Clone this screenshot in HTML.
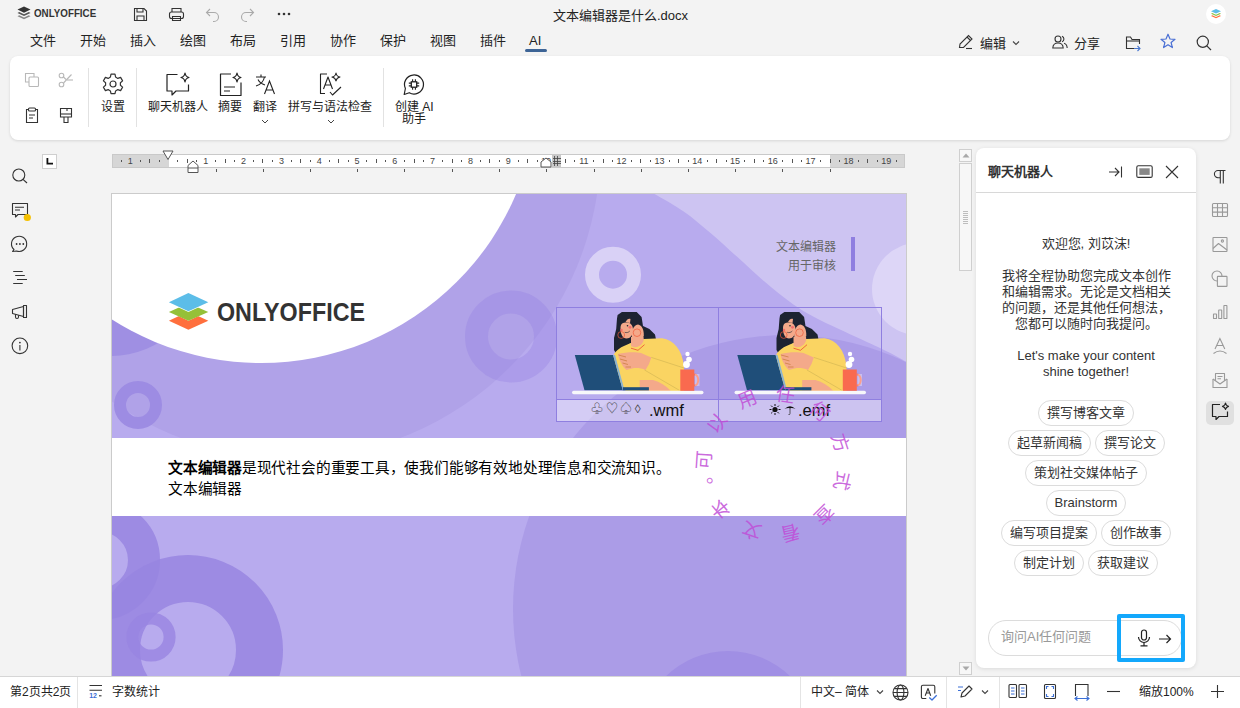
<!DOCTYPE html>
<html lang="zh-CN"><head><meta charset="utf-8">
<style>
*{margin:0;padding:0;box-sizing:border-box}
html,body{width:1240px;height:708px;overflow:hidden}
body{background:#f3f3f3;font-family:"Liberation Sans",sans-serif;color:#222;position:relative}
.a{position:absolute}
.t{position:absolute;white-space:nowrap;line-height:1}
svg{position:absolute;overflow:visible}
.menu{font-size:13px;color:#222;top:34px}
.tb{font-size:12px;color:#222}
.panel{left:10px;top:56px;width:1220px;height:84px;background:#fff;border-radius:8px;box-shadow:0 1px 3px rgba(0,0,0,.12)}
.sep{position:absolute;width:1px;background:#e2e2e2}
.chip{position:absolute;height:26px;border:1px solid #dcdcdc;border-radius:13px;font-size:13px;line-height:24px;color:#333;text-align:center;white-space:nowrap}
</style></head>
<body>
<!-- TITLE BAR -->

<svg style="left:17px;top:6px" width="14" height="15" viewBox="0 0 14 15">
 <path d="M7 0.5 L13.5 3.6 L7 6.7 L0.5 3.6Z" fill="#333"/>
 <path d="M2.2 6 L7 8.3 L11.8 6 L13.5 6.9 L7 10 L0.5 6.9Z" fill="#555"/>
 <path d="M2.2 9.3 L7 11.6 L11.8 9.3 L13.5 10.2 L7 13.3 L0.5 10.2Z" fill="#888"/>
</svg>
<div class="t" style="left:34px;top:8px;font-size:11px;font-weight:bold;color:#333;transform:scaleX(0.89);transform-origin:0 0">ONLYOFFICE</div>
<svg style="left:133px;top:7px" width="15" height="15" viewBox="0 0 15 15" fill="none" stroke="#333" stroke-width="1.1">
 <path d="M1.5 1.5 H11 L13.5 4 V13.5 H1.5Z"/><path d="M4 1.5 V5 H10 V1.5"/><path d="M4 13.5 V9 H11 V13.5"/>
</svg>
<svg style="left:168px;top:7px" width="17" height="15" viewBox="0 0 17 15" fill="none" stroke="#333" stroke-width="1.1">
 <path d="M4 5 V1.5 H13 V5"/><rect x="1.5" y="5" width="14" height="6.5" rx="2"/><path d="M4.5 9.5 H12.5 V13.5 H4.5Z"/>
</svg>
<svg style="left:205px;top:7px" width="15" height="15" viewBox="0 0 15 15" fill="none" stroke="#aaa" stroke-width="1.1">
 <path d="M1.5 5.5 H9 A4.5 4.5 0 0 1 9 14.5 H8"/><path d="M5 2 L1.5 5.5 L5 9"/>
</svg>
<svg style="left:240px;top:7px" width="15" height="15" viewBox="0 0 15 15" fill="none" stroke="#aaa" stroke-width="1.1">
 <path d="M13.5 5.5 H6 A4.5 4.5 0 0 0 6 14.5 H7"/><path d="M10 2 L13.5 5.5 L10 9"/>
</svg>
<svg style="left:277px;top:12px" width="14" height="4" viewBox="0 0 14 4" fill="#333">
 <circle cx="2" cy="2" r="1.3"/><circle cx="7" cy="2" r="1.3"/><circle cx="12" cy="2" r="1.3"/>
</svg>
<div class="t" style="left:553px;top:8.5px;font-size:13px;color:#222">文本编辑器是什么.docx</div>
<div class="a" style="left:1206px;top:4px;width:20px;height:20px;border-radius:50%;background:#fff"></div>
<svg style="left:1210px;top:8px" width="12" height="12" viewBox="0 0 12 12">
 <path d="M6 1 L11 3.3 L6 5.6 L1 3.3Z" fill="#5dbde8"/>
 <path d="M2.3 5 L6 6.8 L9.7 5 L11 5.7 L6 8 L1 5.7Z" fill="#8bc34a"/>
 <path d="M2.3 7.3 L6 9.1 L9.7 7.3 L11 8 L6 10.3 L1 8Z" fill="#ff6f3d"/>
</svg>
<div class="t menu" style="left:30px">文件</div>
<div class="t menu" style="left:80px">开始</div>
<div class="t menu" style="left:130px">插入</div>
<div class="t menu" style="left:180px">绘图</div>
<div class="t menu" style="left:230px">布局</div>
<div class="t menu" style="left:280px">引用</div>
<div class="t menu" style="left:330px">协作</div>
<div class="t menu" style="left:380px">保护</div>
<div class="t menu" style="left:430px">视图</div>
<div class="t menu" style="left:480px">插件</div>
<div class="t menu" style="left:529px">AI</div>
<div class="a" style="left:525px;top:49px;width:22px;height:3px;border-radius:2px;background:#3d6496"></div>
<!-- header right -->
<svg style="left:958px;top:34px" width="16" height="16" viewBox="0 0 16 16" fill="none" stroke="#333" stroke-width="1.1">
 <path d="M1.5 13.5 L2 10 L10.5 1.5 L14 5 L5.5 13.5Z"/><path d="M9 3 L12.5 6.5"/><path d="M8 14.5 H14"/>
</svg>
<div class="t" style="left:980px;top:37px;font-size:13px;color:#222">编辑</div>
<svg style="left:1012px;top:40px" width="8" height="6" viewBox="0 0 8 6" fill="none" stroke="#444" stroke-width="1.1"><path d="M1 1.5 L4 4.5 L7 1.5"/></svg>
<svg style="left:1052px;top:35px" width="16" height="14" viewBox="0 0 16 14" fill="none" stroke="#333" stroke-width="1.1">
 <circle cx="6" cy="4" r="3"/><path d="M0.8 13 C1 9.5 3 8 6 8 C9 8 11 9.5 11.2 13Z"/><path d="M10 1.2 A3 3 0 0 1 10 6.8"/><path d="M12 8.3 C14 8.8 15 10.5 15.2 13"/>
</svg>
<div class="t" style="left:1074px;top:37px;font-size:13px;color:#222">分享</div>
<svg style="left:1125px;top:35px" width="16" height="17" viewBox="0 0 16 17" fill="none" stroke="#333" stroke-width="1.1">
 <path d="M14.5 9 V4.5 H7 L5.5 2 H1.5 V13.5 H9"/><path d="M1.5 6 H14.5"/>
 <path d="M9 13.5 H15 M12.5 11 L15 13.5 L12.5 16" stroke="#4a78d0"/>
</svg>
<svg style="left:1160px;top:33px" width="16" height="16" viewBox="0 0 16 16" fill="none" stroke="#4a6fd4" stroke-width="1.2" stroke-linejoin="round">
 <path d="M8 1.2 L10 6 L15 6.3 L11.1 9.5 L12.4 14.6 L8 11.8 L3.6 14.6 L4.9 9.5 L1 6.3 L6 6Z"/>
</svg>
<svg style="left:1196px;top:35px" width="16" height="16" viewBox="0 0 16 16" fill="none" stroke="#333" stroke-width="1.2">
 <circle cx="6.8" cy="6.8" r="5.6"/><path d="M10.8 10.8 L15 15"/>
</svg>

<div class="panel a"></div>

<svg style="left:24px;top:72px" width="16" height="16" viewBox="0 0 16 16" fill="none" stroke="#b8b8b8" stroke-width="1.1">
 <path d="M10 5 V1.5 H1.5 V10 H5"/><rect x="5" y="5" width="9.5" height="9.5" rx="1"/>
</svg>
<svg style="left:58px;top:72px" width="16" height="16" viewBox="0 0 16 16" fill="none" stroke="#b8b8b8" stroke-width="1.1">
 <circle cx="3.5" cy="3.5" r="2.3"/><circle cx="3.5" cy="12.5" r="2.3"/><path d="M5.5 11 L13.5 2.5"/><path d="M5.5 5 L8 7.5"/><path d="M9 8 H15"/>
</svg>
<svg style="left:25px;top:107px" width="14" height="17" viewBox="0 0 14 17" fill="none" stroke="#333" stroke-width="1.1">
 <path d="M3.5 2.5 H1.5 V15.5 H12.5 V2.5 H10.5"/><rect x="3.5" y="1" width="7" height="3" rx="1"/><path d="M4 8 H10 M4 11 H8"/>
</svg>
<svg style="left:59px;top:107px" width="14" height="17" viewBox="0 0 14 17" fill="none" stroke="#333" stroke-width="1.1">
 <path d="M1.5 1.5 H12.5 V10 H1.5Z"/><path d="M1.5 7 H12.5"/><path d="M8 1.5 V4"/><path d="M5 10 V15.5 H9 V10"/>
</svg>
<div class="sep" style="left:88px;top:68px;height:59px"></div>
<svg style="left:102px;top:73px" width="22" height="22" viewBox="0 0 22 22" fill="none" stroke="#333" stroke-width="1.2" stroke-linejoin="round">
 <path d="M9 1.5 H13 L13.6 4.4 L15.8 5.7 L18.6 4.7 L20.6 8.2 L18.4 10.1 V12.6 L20.6 14.4 L18.6 17.9 L15.8 16.9 L13.6 18.2 L13 21 H9 L8.4 18.2 L6.2 16.9 L3.4 17.9 L1.4 14.4 L3.6 12.6 V10.1 L1.4 8.2 L3.4 4.7 L6.2 5.7 L8.4 4.4Z" transform="translate(0,-0.3)"/>
 <circle cx="11" cy="11" r="3"/>
</svg>
<div class="t tb" style="left:101px;top:101px">设置</div>
<div class="sep" style="left:136px;top:68px;height:59px"></div>
<svg style="left:165px;top:72px" width="26" height="25" viewBox="0 0 26 25" fill="none" stroke="#222" stroke-width="1.2" stroke-linejoin="round">
 <path d="M12.5 2.5 H2 V19 H7 V23 L11 19 H23.5 V12.5"/>
 <path d="M20 1 Q20.6 4.8 24 5.5 Q20.6 6.2 20 10 Q19.4 6.2 16 5.5 Q19.4 4.8 20 1Z"/>
</svg>
<div class="t tb" style="left:148px;top:101px">聊天机器人</div>
<svg style="left:219px;top:72px" width="25" height="25" viewBox="0 0 25 25" fill="none" stroke="#222" stroke-width="1.2" stroke-linejoin="round">
 <path d="M12 2 H1.5 V23.5 H22 V10.5"/><path d="M5 15 H16 M5 19 H11"/>
 <path d="M18 1 Q18.6 4.8 22 5.5 Q18.6 6.2 18 10 Q17.4 6.2 14 5.5 Q17.4 4.8 18 1Z"/>
</svg>
<div class="t tb" style="left:218px;top:101px">摘要</div>
<svg style="left:255px;top:73px" width="22" height="22" viewBox="0 0 22 22" fill="none" stroke="#222" stroke-width="1.1">
 <path d="M1 4 H11 M6 1.5 V4 M9.5 4 Q8 11 1 13 M3 6.5 Q5 10.5 10 12"/>
 <path d="M9.5 21 L14.5 8 L19.5 21 M11 17 H18"/>
</svg>
<div class="t tb" style="left:253px;top:101px">翻译</div>
<svg style="left:261px;top:119px" width="8" height="5" viewBox="0 0 8 5" fill="none" stroke="#444" stroke-width="1"><path d="M1 1 L4 4 L7 1"/></svg>
<svg style="left:319px;top:72px" width="24" height="25" viewBox="0 0 24 25" fill="none" stroke="#222" stroke-width="1.1" stroke-linejoin="round">
 <path d="M8 2 H1.5 V21.5 H6"/><path d="M4.5 17 L9 5 L13.5 17 M6 13 H12"/>
 <path d="M11 20 L13.5 23 L22 15"/>
 <path d="M17 1 Q17.6 4.5 21 5 Q17.6 5.6 17 9 Q16.4 5.6 13 5 Q16.4 4.5 17 1Z"/>
</svg>
<div class="t tb" style="left:288px;top:101px">拼写与语法检查</div>
<svg style="left:327px;top:119px" width="8" height="5" viewBox="0 0 8 5" fill="none" stroke="#444" stroke-width="1"><path d="M1 1 L4 4 L7 1"/></svg>
<div class="sep" style="left:383px;top:68px;height:59px"></div>
<svg style="left:403px;top:73.5px" width="22" height="23" viewBox="0 0 22 23" fill="none" stroke="#222" stroke-width="1.2">
 <path d="M6.25 18.7 A9.5 9.5 0 1 0 2.39 14.5 L1.2 20.5 Z" stroke-linejoin="round"/>
 <rect x="8.3" y="7.8" width="5.4" height="5.4" stroke-width="1.3"/><path d="M9.6 5.3 V7.8 M12.4 5.3 V7.8 M9.6 13.2 V15.7 M12.4 13.2 V15.7 M5.8 9.1 H8.3 M5.8 11.9 H8.3 M13.7 9.1 H16.2 M13.7 11.9 H16.2" stroke-width="1.1"/>
</svg>
<div class="t tb" style="left:395px;top:101px">创建 AI</div>
<div class="t tb" style="left:402px;top:113px">助手</div>


<svg style="left:11px;top:168px" width="18" height="18" viewBox="0 0 18 18" fill="none" stroke="#333" stroke-width="1.1">
 <circle cx="7.8" cy="7" r="6"/><path d="M12 11.3 L16 15"/>
</svg>
<svg style="left:11px;top:202px" width="22" height="20" viewBox="0 0 22 20" fill="none" stroke="#333" stroke-width="1.1" stroke-linejoin="round">
 <path d="M1.5 1.5 H16.5 V12.5 H7 L4.5 15 V12.5 H1.5Z"/><path d="M4 5.3 H13 M4 8 H9"/>
 <circle cx="16.3" cy="15.5" r="3.6" fill="#f5c000" stroke="none"/>
</svg>
<svg style="left:11px;top:235px" width="18" height="18" viewBox="0 0 18 18" fill="none" stroke="#333" stroke-width="1.1">
 <path d="M3 14.5 A7.6 7.6 0 1 1 5.5 16 L1.5 16.5 Z" stroke-linejoin="round"/>
 <circle cx="5.6" cy="9" r="0.9" fill="#333" stroke="none"/><circle cx="8.9" cy="9" r="0.9" fill="#333" stroke="none"/><circle cx="12.3" cy="9" r="0.9" fill="#333" stroke="none"/>
</svg>
<svg style="left:11px;top:268px" width="18" height="18" viewBox="0 0 18 18" fill="none" stroke="#333" stroke-width="1.1">
 <path d="M2.2 3.5 H11.7 M4.2 7.5 H13.8 M6 11.5 H16 M2.2 15.5 H11.7"/>
</svg>
<svg style="left:11px;top:304px" width="18" height="18" viewBox="0 0 18 18" fill="none" stroke="#333" stroke-width="1.1" stroke-linejoin="round">
 <path d="M1.5 5.5 L12.5 2.5 V12.5 L1.5 9.5 Z"/><rect x="12.5" y="1.5" width="3" height="12"/><path d="M4.5 10.3 V13 Q4.5 14.5 6 14.5 Q7.5 14.5 7.5 13 V11.2"/>
</svg>
<svg style="left:11px;top:337px" width="18" height="18" viewBox="0 0 18 18" fill="none" stroke="#333" stroke-width="1.1">
 <circle cx="8.9" cy="8.8" r="7.8"/><path d="M8.9 8 V13.4"/><circle cx="8.9" cy="5.6" r="0.9" fill="#333" stroke="none"/>
</svg>

<svg style="left:0;top:0" width="1240" height="200" shape-rendering="crispEdges"><rect x="112.5" y="154.5" width="792" height="13" fill="#fff" stroke="#c9c9c9"/><rect x="113" y="155" width="55.5" height="12" fill="#d6d6d6"/><rect x="830" y="155" width="74" height="12" fill="#d6d6d6"/><rect x="121" y="159.5" width="1" height="2" fill="#555"/><rect x="140" y="159.5" width="1" height="2" fill="#555"/><rect x="149" y="158.5" width="1" height="4" fill="#555"/><rect x="159" y="159.5" width="1" height="2" fill="#555"/><rect x="177" y="159.5" width="1" height="2" fill="#555"/><rect x="187" y="158.5" width="1" height="4" fill="#555"/><rect x="196" y="159.5" width="1" height="2" fill="#555"/><rect x="215" y="159.5" width="1" height="2" fill="#555"/><rect x="225" y="158.5" width="1" height="4" fill="#555"/><rect x="234" y="159.5" width="1" height="2" fill="#555"/><rect x="253" y="159.5" width="1" height="2" fill="#555"/><rect x="262" y="158.5" width="1" height="4" fill="#555"/><rect x="272" y="159.5" width="1" height="2" fill="#555"/><rect x="291" y="159.5" width="1" height="2" fill="#555"/><rect x="300" y="158.5" width="1" height="4" fill="#555"/><rect x="310" y="159.5" width="1" height="2" fill="#555"/><rect x="329" y="159.5" width="1" height="2" fill="#555"/><rect x="338" y="158.5" width="1" height="4" fill="#555"/><rect x="348" y="159.5" width="1" height="2" fill="#555"/><rect x="366" y="159.5" width="1" height="2" fill="#555"/><rect x="376" y="158.5" width="1" height="4" fill="#555"/><rect x="385" y="159.5" width="1" height="2" fill="#555"/><rect x="404" y="159.5" width="1" height="2" fill="#555"/><rect x="414" y="158.5" width="1" height="4" fill="#555"/><rect x="423" y="159.5" width="1" height="2" fill="#555"/><rect x="442" y="159.5" width="1" height="2" fill="#555"/><rect x="452" y="158.5" width="1" height="4" fill="#555"/><rect x="461" y="159.5" width="1" height="2" fill="#555"/><rect x="480" y="159.5" width="1" height="2" fill="#555"/><rect x="489" y="158.5" width="1" height="4" fill="#555"/><rect x="499" y="159.5" width="1" height="2" fill="#555"/><rect x="518" y="159.5" width="1" height="2" fill="#555"/><rect x="527" y="158.5" width="1" height="4" fill="#555"/><rect x="537" y="159.5" width="1" height="2" fill="#555"/><rect x="555" y="159.5" width="1" height="2" fill="#555"/><rect x="565" y="158.5" width="1" height="4" fill="#555"/><rect x="574" y="159.5" width="1" height="2" fill="#555"/><rect x="593" y="159.5" width="1" height="2" fill="#555"/><rect x="603" y="158.5" width="1" height="4" fill="#555"/><rect x="612" y="159.5" width="1" height="2" fill="#555"/><rect x="631" y="159.5" width="1" height="2" fill="#555"/><rect x="640" y="158.5" width="1" height="4" fill="#555"/><rect x="650" y="159.5" width="1" height="2" fill="#555"/><rect x="669" y="159.5" width="1" height="2" fill="#555"/><rect x="678" y="158.5" width="1" height="4" fill="#555"/><rect x="688" y="159.5" width="1" height="2" fill="#555"/><rect x="707" y="159.5" width="1" height="2" fill="#555"/><rect x="716" y="158.5" width="1" height="4" fill="#555"/><rect x="726" y="159.5" width="1" height="2" fill="#555"/><rect x="744" y="159.5" width="1" height="2" fill="#555"/><rect x="754" y="158.5" width="1" height="4" fill="#555"/><rect x="763" y="159.5" width="1" height="2" fill="#555"/><rect x="782" y="159.5" width="1" height="2" fill="#555"/><rect x="792" y="158.5" width="1" height="4" fill="#555"/><rect x="801" y="159.5" width="1" height="2" fill="#555"/><rect x="820" y="159.5" width="1" height="2" fill="#555"/><rect x="830" y="158.5" width="1" height="4" fill="#555"/><rect x="839" y="159.5" width="1" height="2" fill="#555"/><rect x="858" y="159.5" width="1" height="2" fill="#555"/><rect x="867" y="158.5" width="1" height="4" fill="#555"/><rect x="877" y="159.5" width="1" height="2" fill="#555"/><rect x="896" y="159.5" width="1" height="2" fill="#555"/></svg><svg style="left:0;top:0" width="1240" height="200"><text x="130.2" y="164" font-size="9" text-anchor="middle" font-family="Liberation Sans" fill="#444">1</text><text x="205.8" y="164" font-size="9" text-anchor="middle" font-family="Liberation Sans" fill="#444">1</text><text x="243.6" y="164" font-size="9" text-anchor="middle" font-family="Liberation Sans" fill="#444">2</text><text x="281.4" y="164" font-size="9" text-anchor="middle" font-family="Liberation Sans" fill="#444">3</text><text x="319.2" y="164" font-size="9" text-anchor="middle" font-family="Liberation Sans" fill="#444">4</text><text x="357.0" y="164" font-size="9" text-anchor="middle" font-family="Liberation Sans" fill="#444">5</text><text x="394.8" y="164" font-size="9" text-anchor="middle" font-family="Liberation Sans" fill="#444">6</text><text x="432.6" y="164" font-size="9" text-anchor="middle" font-family="Liberation Sans" fill="#444">7</text><text x="470.4" y="164" font-size="9" text-anchor="middle" font-family="Liberation Sans" fill="#444">8</text><text x="508.2" y="164" font-size="9" text-anchor="middle" font-family="Liberation Sans" fill="#444">9</text><text x="546.0" y="164" font-size="9" text-anchor="middle" font-family="Liberation Sans" fill="#444">10</text><text x="583.8" y="164" font-size="9" text-anchor="middle" font-family="Liberation Sans" fill="#444">11</text><text x="621.6" y="164" font-size="9" text-anchor="middle" font-family="Liberation Sans" fill="#444">12</text><text x="659.4" y="164" font-size="9" text-anchor="middle" font-family="Liberation Sans" fill="#444">13</text><text x="697.2" y="164" font-size="9" text-anchor="middle" font-family="Liberation Sans" fill="#444">14</text><text x="735.0" y="164" font-size="9" text-anchor="middle" font-family="Liberation Sans" fill="#444">15</text><text x="772.8" y="164" font-size="9" text-anchor="middle" font-family="Liberation Sans" fill="#444">16</text><text x="810.6" y="164" font-size="9" text-anchor="middle" font-family="Liberation Sans" fill="#444">17</text><text x="848.4" y="164" font-size="9" text-anchor="middle" font-family="Liberation Sans" fill="#444">18</text><text x="886.2" y="164" font-size="9" text-anchor="middle" font-family="Liberation Sans" fill="#444">19</text><rect x="216" y="169" width="1" height="3" fill="#555"/><rect x="263" y="169" width="1" height="3" fill="#555"/><rect x="310" y="169" width="1" height="3" fill="#555"/><rect x="357" y="169" width="1" height="3" fill="#555"/><rect x="404" y="169" width="1" height="3" fill="#555"/><rect x="452" y="169" width="1" height="3" fill="#555"/><rect x="499" y="169" width="1" height="3" fill="#555"/><rect x="546" y="169" width="1" height="3" fill="#555"/><rect x="594" y="169" width="1" height="3" fill="#555"/><rect x="641" y="169" width="1" height="3" fill="#555"/><rect x="688" y="169" width="1" height="3" fill="#555"/><rect x="735" y="169" width="1" height="3" fill="#555"/><rect x="782" y="169" width="1" height="3" fill="#555"/><rect x="830" y="169" width="1" height="3" fill="#555"/></svg><svg style="left:162px;top:150px" width="12" height="11" viewBox="0 0 12 11"><path d="M1 1 H11 L6 9.5Z" fill="#fff" stroke="#555" stroke-width="1"/></svg>
<svg style="left:187px;top:160px" width="12" height="14" viewBox="0 0 12 14"><path d="M1 5.5 L6 1 L11 5.5 V12.5 H1Z M1 8 H11" fill="#fff" stroke="#555" stroke-width="1"/></svg>
<svg style="left:540px;top:157px" width="12" height="11" viewBox="0 0 12 11"><path d="M1 5 L6 1 L11 5 V10 H1Z" fill="#fff" stroke="#555" stroke-width="1"/></svg>
<div class="a" style="left:552px;top:155px;width:9px;height:12px;background:#c8c8c8"></div>
<svg style="left:552px;top:156px" width="9" height="10" viewBox="0 0 9 10" stroke="#444" stroke-width="0.8" shape-rendering="crispEdges"><path d="M2.5 0 V10 M5.5 0 V10 M0.5 2.5 H8.5 M0.5 5 H8.5 M0.5 7.5 H8.5"/></svg>
<div class="a" style="left:42px;top:154px;width:15px;height:15px;background:#fff;border:1px solid #cfcfcf"></div>
<svg style="left:46px;top:158px" width="7" height="7" viewBox="0 0 7 7"><path d="M0.5 0 V6.5 H7 V4.8 H2.3 V0Z" fill="#111"/></svg>


<div class="a" style="left:111px;top:193px;width:796px;height:490px;border:1px solid #cbcbcb;background:#fff"></div>
<svg style="left:111px;top:193px" width="795" height="483" viewBox="0 0 795 483">
 <defs>
  <clipPath id="pc"><rect x="1" y="1" width="794" height="482"/></clipPath>
  <mask id="ringA"><rect x="-200" y="-200" width="1200" height="900" fill="#fff"/></mask>
  <g id="girl">
   <path d="M61.6,9 L65.9,6 L80.7,6 L85.6,11 L87,20 L93.4,23 L99,28.5 L100,33.5 L88,33.5 L74,37.5 L60,47.5 L58,44 L58,32 L60.2,23 L61,12.6 Z" fill="#1d2331"/>
   <path d="M58,48 C62,42 68,40 74.3,37.3 L87.8,33 L106,32.3 C118,34 126,44 128,60 L128,85 L70,85 C62,78 57,60 58,48Z" fill="#fad462"/>
   <path d="M75,31 L87.5,31 L87.8,34 C86,40 80,43 75,40Z" fill="#f4a98a"/>
   <path d="M75,42.2 L82,44.3 L88.5,38.7" fill="none" stroke="#ef5a3a" stroke-width="0.9"/>
   <path d="M64.5,22 C64.5,17.5 67,16.5 70.5,16.5 C74.5,16.5 77,19 77,24 C77,29.5 74,32.5 70.5,32.5 C66.5,32.5 64.5,28 64.5,22Z" fill="#f4a98a"/>
   <path d="M69.5,16 C71,13 73,12 74.5,13 L74,17Z" fill="#f4a98a"/>
   <path d="M76,32 C75,26 77,19 82,18.5 C86,19 88,24 87.8,30 L86,33Z" fill="#f4a98a"/>
   <circle cx="71.5" cy="19.8" r="0.8" fill="#1d2331"/>
   <circle cx="74" cy="21.3" r="1.4" fill="#f56d6d"/><circle cx="65.5" cy="24" r="1.2" fill="#f56d6d"/>
   <path d="M68.7,26.3 C70.5,27 72.5,26.5 73.8,25" fill="none" stroke="#1d2331" stroke-width="0.6"/>
   <circle cx="65.2" cy="29" r="3.4" fill="none" stroke="#ef5a3a" stroke-width="0.7"/>
   <circle cx="81" cy="26.7" r="3.8" fill="none" stroke="#ef5a3a" stroke-width="0.7"/>
   <path d="M95.3,51.4 L128,62" stroke="#b9a24a" stroke-width="0.4" fill="none"/>
   <path d="M88.5,64 L123.4,84.3" stroke="#b9a24a" stroke-width="0.4" fill="none"/>
   <path d="M62,48 C70,46 80,46 85,47 L95.3,51.4 L93,58 L89.5,64 C85,62 80,61.5 76,62.5 L70.5,64 C66,60 63,54 62,48Z" fill="#f4a98a"/>
   <path d="M62.5,49 L70,51 M64,53 L71,55 M66.5,57 L72,58.5 M69.5,61 L75,61" stroke="#c77a3a" stroke-width="0.7" fill="none"/>
   <path d="M83.7,74 L97,74 C104,76 110,80 114.7,84.8 L83.7,84.8Z" fill="#f4a98a"/>
   <path d="M18.8,49 L57.1,49 L66.8,84.3 L28.5,84.3Z" fill="#1f4e79"/>
   <path d="M57.1,49 L59,49 L68.5,84.3 L66.8,84.3Z" fill="#8ab4d4"/>
   <path d="M66.8,81.2 L92.9,81.2 L92.9,84.5 L66.8,84.5Z" fill="#1f4e79"/>
   <rect x="16" y="84.8" width="131.5" height="3.4" rx="1.7" fill="#f7f7fa"/>
   <rect x="124.3" y="63.5" width="14" height="21.3" fill="#f96a4f"/>
   <path d="M138.3,68.5 C143.5,68.5 143.5,79.5 138.3,79.5" fill="none" stroke="#f96a4f" stroke-width="2"/>
   <rect x="139" y="68" width="4.5" height="12" fill="#fff" opacity="0.35"/>
   <circle cx="130.5" cy="58.5" r="3.4" fill="#fff"/><circle cx="133" cy="53.5" r="2.8" fill="#fff"/><circle cx="131.5" cy="48" r="2.2" fill="#fff"/>
  </g>
 </defs>
 <g clip-path="url(#pc)">
  <rect x="0" y="0" width="795" height="483" fill="#b8abee"/>
  <!-- top light region -->
  <path d="M541.8,0.0 C546.9,3.1 563.1,11.8 572.7,18.5 C582.3,25.2 590.5,32.4 599.5,40.0 C608.5,47.6 617.4,56.1 626.4,64.1 C635.4,72.2 644.2,80.7 653.2,88.3 C662.2,95.9 671.2,103.5 680.1,109.8 C689.0,116.1 691.9,118.3 706.9,125.9 C721.9,133.5 755.2,148.2 770.0,155.4 C784.8,162.5 791.2,166.6 795.5,168.8 L800,168.8 L800,-5 L541.8,-5 Z" fill="#cdc4f2"/>
  <!-- darker circle -->
  <circle cx="179.5" cy="-45" r="310" fill="#b0a2e8"/>
  <!-- big lower right circle -->
  <circle cx="676" cy="416" r="274" fill="#ab9ce7"/>
  <circle cx="617" cy="547" r="89" fill="#a08fe4"/>
  <!-- left dark patch -->
  <circle cx="-1" cy="67" r="96" fill="#9f8fe3"/>
  <!-- white circle -->
  <circle cx="150" cy="-107" r="277" fill="#ffffff"/>
  <!-- rings -->
  <circle cx="27" cy="212" r="18" fill="none" stroke="#9d8ce3" stroke-width="12"/>
  <circle cx="400" cy="143.5" r="34.5" fill="none" stroke="rgba(150,130,225,0.35)" stroke-width="23"/>
  <circle cx="502" cy="81.69999999999999" r="21" fill="none" stroke="#d9d1f6" stroke-width="14"/>
  <circle cx="807" cy="96" r="46" fill="#ddd6f7"/>
  <!-- lower rings -->
  <circle cx="-11" cy="367" r="44" fill="none" stroke="rgba(152,133,225,0.85)" stroke-width="32"/>
  <circle cx="77" cy="457" r="71.5" fill="none" stroke="rgba(152,133,225,0.85)" stroke-width="47"/>
  <circle cx="40" cy="444" r="18.6" fill="none" stroke="rgba(152,133,225,0.8)" stroke-width="12"/>
  <!-- white band -->
  <rect x="1" y="245" width="794" height="78" fill="#fff"/>
  <!-- logo -->
  <path d="M77.4,118.60000000000002 L97.30000000000001,127.80000000000001 L77.4,136.8 L57.900000000000006,127.80000000000001Z" fill="#ff6f3d"/>
  <path d="M77.4,109.60000000000002 L97.30000000000001,118.60000000000002 L77.4,127.69999999999999 L57.900000000000006,118.60000000000002Z" fill="#fff"/>
  <path d="M77.4,110.19999999999999 L97.30000000000001,119 L77.4,127.69999999999999 L57.900000000000006,119Z" fill="#95c038"/>
  <path d="M77.4,101 L97.30000000000001,110 L77.4,119 L57.900000000000006,110Z" fill="#fff"/>
  <path d="M77.4,100 L97.30000000000001,109.19999999999999 L77.4,118.30000000000001 L57.900000000000006,109.19999999999999Z" fill="#5cbde8"/>
 </g>
 <text x="106" y="127.5" font-family="Liberation Sans" font-weight="bold" font-size="25" fill="#333" textLength="148" lengthAdjust="spacingAndGlyphs">ONLYOFFICE</text>
 <rect x="740" y="44" width="4" height="34" fill="#8f7fe0"/>
 <!-- table -->
 <rect x="446" y="206.5" width="324.5" height="22.5" fill="rgba(255,255,255,0.4)"/>
 <use href="#girl" x="445" y="113"/>
 <use href="#girl" x="607.5" y="113"/>
 <g fill="none" stroke="#8f7fe0" stroke-width="1" shape-rendering="crispEdges">
  <rect x="445.5" y="114.5" width="325" height="114"/>
  <path d="M607.5,114.5 V228.5 M445.5,206.5 H770.5"/>
 </g>
</svg>
<div class="t" style="left:776px;top:241px;font-size:12px;color:#666">文本编辑器</div>
<div class="t" style="left:788px;top:259.5px;font-size:12px;color:#666">用于审核</div>
<div class="t" style="left:591px;top:403px;font-size:12px;color:#444;letter-spacing:2.6px">♧♡♤◊</div><div class="t" style="left:649px;top:401.5px;font-size:16.5px;color:#111">.wmf</div>
<svg style="left:769px;top:403px" width="28" height="13" viewBox="0 0 28 13">
 <circle cx="6" cy="6.5" r="2.6" fill="#111"/>
 <g stroke="#111" stroke-width="1"><path d="M6 1 V3 M6 10 V12 M0.5 6.5 H2.5 M9.5 6.5 H11.5 M2.1 2.6 L3.5 4 M8.5 9 L9.9 10.4 M2.1 10.4 L3.5 9 M8.5 4 L9.9 2.6"/></g>
 <path d="M15.5 6 Q21 0.5 26.5 6 Q24 4.8 21 5.2 Q18 4.8 15.5 6Z" fill="#111"/>
 <path d="M21 5 V10.5 Q21 12 19.5 11.5" fill="none" stroke="#333" stroke-width="0.8"/>
</svg>
<div class="t" style="left:798px;top:401.5px;font-size:16.5px;color:#111">.emf</div>
<div class="t" style="left:168px;top:460.5px;font-size:14.67px;color:#000;letter-spacing:-0.22px"><b>文本编辑器</b>是现代社会的重要工具，使我们能够有效地处理信息和交流知识。</div>
<div class="t" style="left:168px;top:481.5px;font-size:14.67px;color:#000;letter-spacing:-0.22px">文本编辑器</div>


<div class="a" style="left:959px;top:149px;width:13px;height:13px;border:1px solid #cfcfcf;background:#f7f7f7"></div>
<svg style="left:962px;top:153px" width="8" height="5" viewBox="0 0 8 5"><path d="M0.5 4.5 L4 0.5 L7.5 4.5Z" fill="#a8a8a8"/></svg>
<div class="a" style="left:959px;top:163px;width:13px;height:108px;border:1px solid #cfcfcf;background:#f7f7f7"></div>
<svg style="left:963px;top:211px" width="6" height="14" viewBox="0 0 6 14" stroke="#bdbdbd" stroke-width="1" shape-rendering="crispEdges"><path d="M0 0.5 H5 M0 2.5 H5 M0 4.5 H5 M0 6.5 H5 M0 8.5 H5 M0 10.5 H5 M0 12.5 H5"/></svg>
<div class="a" style="left:959px;top:662px;width:13px;height:13px;border:1px solid #cfcfcf;background:#f7f7f7"></div>
<svg style="left:962px;top:666px" width="8" height="5" viewBox="0 0 8 5"><path d="M0.5 0.5 L4 4.5 L7.5 0.5Z" fill="#a8a8a8"/></svg>


<div class="a" style="left:976px;top:148px;width:220px;height:520px;background:#fff;border-radius:8px;box-shadow:0 1px 4px rgba(0,0,0,.10)"></div>
<div class="a" style="left:976px;top:192px;width:220px;height:1px;background:#d8d8d8"></div>
<div class="t" style="left:988px;top:165px;font-size:13px;font-weight:bold;color:#333">聊天机器人</div>
<svg style="left:1108px;top:165px" width="15" height="14" viewBox="0 0 15 14" fill="none" stroke="#333" stroke-width="1.1">
 <path d="M1 7 H11 M7 3 L11 7 L7 11"/><path d="M13.5 1.5 V12.5"/>
</svg>
<svg style="left:1136px;top:165px" width="17" height="14" viewBox="0 0 17 14">
 <rect x="0.8" y="0.8" width="15.4" height="11.6" rx="1.5" fill="none" stroke="#333" stroke-width="1.1"/><rect x="3.3" y="3.3" width="10.4" height="6.6" fill="#888"/>
</svg>
<svg style="left:1165px;top:165px" width="14" height="14" viewBox="0 0 14 14" fill="none" stroke="#333" stroke-width="1.1"><path d="M1 1 L13 13 M13 1 L1 13"/></svg>
<div class="a" style="left:976px;top:236px;width:220px;font-size:13px;line-height:16px;color:#333;text-align:center">
 <div>欢迎您, 刘苡沫!</div>
 <div style="margin-top:16px">我将全程协助您完成文本创作<br>和编辑需求。无论是文档相关<br>的问题，还是其他任何想法，<br>您都可以随时向我提问。</div>
 <div style="margin-top:16px">Let's make your content<br>shine together!</div>
</div>
<div class="chip" style="left:1038px;top:400px;width:96px">撰写博客文章</div>
<div class="chip" style="left:1008px;top:430px;width:83px">起草新闻稿</div>
<div class="chip" style="left:1095px;top:430px;width:70px">撰写论文</div>
<div class="chip" style="left:1025px;top:460px;width:122px">策划社交媒体帖子</div>
<div class="chip" style="left:1046px;top:490px;width:80px">Brainstorm</div>
<div class="chip" style="left:1001px;top:520px;width:96px">编写项目提案</div>
<div class="chip" style="left:1101px;top:520px;width:70px">创作故事</div>
<div class="chip" style="left:1014px;top:550px;width:70px">制定计划</div>
<div class="chip" style="left:1088px;top:550px;width:70px">获取建议</div>
<div class="a" style="left:988px;top:620px;width:194px;height:36px;border:1px solid #dcdcdc;border-radius:18px"></div>
<div class="t" style="left:1001px;top:630px;font-size:13px;color:#999">询问AI任何问题</div>
<svg style="left:1137px;top:629px" width="14" height="18" viewBox="0 0 14 18" fill="none" stroke="#222" stroke-width="1.2">
 <rect x="4.5" y="1" width="5" height="10" rx="2.5"/><path d="M1.5 8 A5.5 5.5 0 0 0 12.5 8"/><path d="M7 13.5 V16.5 M3.5 16.8 H10.5"/>
</svg>
<svg style="left:1158px;top:634px" width="14" height="10" viewBox="0 0 14 10" fill="none" stroke="#222" stroke-width="1.2"><path d="M1 5 H12.5 M8.5 1 L12.5 5 L8.5 9"/></svg>
<div class="a" style="left:1117px;top:614px;width:68px;height:48px;border:4px solid #13a8fc;border-radius:2px"></div>


<svg style="left:1212px;top:169px" width="15" height="15" viewBox="0 0 15 15" fill="none" stroke="#333" stroke-width="1.1">
 <path d="M13.5 1.5 H6 A3.6 3.6 0 0 0 6 8.7 H8"/><path d="M8.3 1.5 V14.5 M11.3 1.5 V14.5"/></svg>
<svg style="left:1211px;top:202px" width="18" height="16" viewBox="0 0 18 16" fill="none" stroke="#999" stroke-width="1.1">
 <rect x="1.5" y="1.5" width="15" height="13" rx="1"/><path d="M1.5 5.8 H16.5 M1.5 10.1 H16.5 M6.5 1.5 V14.5 M11.5 1.5 V14.5"/>
</svg>
<svg style="left:1211px;top:236px" width="18" height="17" viewBox="0 0 18 17" fill="none" stroke="#999" stroke-width="1.1" stroke-linejoin="round">
 <rect x="2" y="1.5" width="14" height="14" rx="0.5"/><path d="M2 12.5 L7.5 7.5 L16 14"/><circle cx="11.4" cy="5" r="1.1"/>
</svg>
<svg style="left:1211px;top:270px" width="18" height="18" viewBox="0 0 18 18" fill="none" stroke="#999" stroke-width="1.1">
 <path d="M6.3 11 A5 5 0 1 1 11 6.3"/><rect x="6.4" y="6.4" width="9.6" height="10" rx="0.5"/>
</svg>
<svg style="left:1211px;top:304px" width="18" height="16" viewBox="0 0 18 16" fill="none" stroke="#999" stroke-width="1.1">
 <rect x="2.5" y="10" width="3" height="4.5" rx="0.3"/><rect x="7.7" y="6" width="3" height="8.5" rx="0.3"/><rect x="12.9" y="1.5" width="3" height="13" rx="0.3"/>
</svg>
<svg style="left:1211px;top:337px" width="18" height="18" viewBox="0 0 18 18" fill="none" stroke="#999" stroke-width="1.1">
 <path d="M4 12 L8.9 1.5 L13.8 12 M5.7 8.5 H12.1"/><path d="M2.5 16.5 Q9 11.5 15.5 16.5"/>
</svg>
<svg style="left:1211px;top:372px" width="18" height="17" viewBox="0 0 18 17" fill="none" stroke="#999" stroke-width="1.1" stroke-linejoin="round">
 <path d="M2 7 V15.5 H16 V7"/><path d="M2 7 L9 12 L16 7"/><path d="M4.5 8.7 V1.5 H13.5 V8.7"/><path d="M6.5 4.5 H11.5 M6.5 6.8 H10"/>
</svg>
<div class="a" style="left:1206px;top:401px;width:28px;height:24px;border-radius:5px;background:#e0e0e0"></div>
<svg style="left:1211px;top:402px" width="19" height="19" viewBox="0 0 19 19" fill="none" stroke="#222" stroke-width="1.2" stroke-linejoin="round">
 <path d="M9 2.5 H1.5 V14.5 H5 V17.5 L8 14.5 H16.5 V9.5"/>
 <path d="M14.5 1 Q15 3.8 17.5 4.3 Q15 4.8 14.5 7.5 Q14 4.8 11.5 4.3 Q14 3.8 14.5 1Z"/>
</svg>


<div class="a" style="left:0;top:676px;width:1240px;height:32px;background:#fff;border-top:1px solid #d6d6d6"></div>
<div class="t" style="left:10px;top:686px;font-size:12px;color:#222">第2页共2页</div>
<div class="sep" style="left:77px;top:677px;height:31px;background:#e4e4e4"></div>
<svg style="left:88px;top:684px" width="16" height="16" viewBox="0 0 16 16" fill="none" stroke="#333" stroke-width="1.1">
 <path d="M1.5 1.5 H14 M1.5 6.2 H14"/>
 <text x="1.2" y="14" font-size="7" font-family="Liberation Sans" fill="#3b6fd6" stroke="none" font-weight="bold">12</text>
 <path d="M11 11.8 H13.5" stroke="#333"/>
</svg>
<div class="t" style="left:112px;top:686px;font-size:12px;color:#222">字数统计</div>
<div class="sep" style="left:800px;top:677px;height:31px;background:#e4e4e4"></div>
<div class="t" style="left:811px;top:686px;font-size:12px;color:#222">中文–&nbsp;简体</div>
<svg style="left:876px;top:689px" width="8" height="6" viewBox="0 0 8 6" fill="none" stroke="#444" stroke-width="1.1"><path d="M1 1.5 L4 4.5 L7 1.5"/></svg>
<svg style="left:892px;top:684px" width="17" height="17" viewBox="0 0 17 17" fill="none" stroke="#333" stroke-width="1.1">
 <circle cx="8.5" cy="8.5" r="7.5"/><ellipse cx="8.5" cy="8.5" rx="3.4" ry="7.5"/><path d="M1 8.5 H16 M2.3 4.6 H14.7 M2.3 12.4 H14.7"/>
</svg>
<svg style="left:920px;top:684px" width="18" height="18" viewBox="0 0 18 18" fill="none" stroke="#333" stroke-width="1.1" stroke-linejoin="round">
 <path d="M6.3 14.5 H2.9 Q1.4 14.5 1.4 13 V2.8 Q1.4 1.3 2.9 1.3 H13.3 Q14.8 1.3 14.8 2.8 V9.6"/><path d="M5.2 11.7 L8 4.5 L10.7 11.7 M6.2 9 H9.7"/>
 <path d="M9.3 13.5 L12 16 L16.7 11.2" stroke="#3b6fd6" stroke-width="1.3"/>
</svg>
<div class="sep" style="left:946px;top:677px;height:31px;background:#e4e4e4"></div>
<svg style="left:957px;top:684px" width="17" height="16" viewBox="0 0 17 16" fill="none" stroke="#333" stroke-width="1.1" stroke-linejoin="round">
 <path d="M1 3 H6 M1 6.5 H4" stroke="#3b6fd6"/><path d="M4 13 L5 9 L12 2 L15 5 L8 12Z"/>
</svg>
<svg style="left:981px;top:689px" width="8" height="6" viewBox="0 0 8 6" fill="none" stroke="#444" stroke-width="1.1"><path d="M1 1.5 L4 4.5 L7 1.5"/></svg>
<div class="sep" style="left:999px;top:677px;height:31px;background:#e4e4e4"></div>
<svg style="left:1008px;top:683px" width="20" height="16" viewBox="0 0 20 16" fill="none" stroke="#333" stroke-width="1.1">
 <rect x="1" y="1.5" width="7.5" height="13" rx="1"/><rect x="11" y="1.5" width="7.5" height="13" rx="1"/>
 <path d="M3 5 H6.5 M3 8 H6.5 M3 11 H6.5 M13 5 H16.5 M13 8 H16.5 M13 11 H16.5" stroke="#3b6fd6"/>
</svg>
<svg style="left:1043px;top:683px" width="14" height="17" viewBox="0 0 14 17" fill="none" stroke="#333" stroke-width="1.1">
 <rect x="1.5" y="1.5" width="11" height="14" rx="1"/>
 <path d="M3.5 6 V3.5 H5.5 M8.5 3.5 H10.5 V6 M3.5 11 V13.5 H5.5 M8.5 13.5 H10.5 V11" stroke="#3b6fd6"/>
</svg>
<svg style="left:1074px;top:683px" width="16" height="18" viewBox="0 0 16 18" fill="none" stroke="#333" stroke-width="1.1">
 <path d="M1.5 13 V1.5 H14 V13"/>
 <path d="M1 15.5 H15 M3.5 13.5 L1 15.5 L3.5 17.5 M12.5 13.5 L15 15.5 L12.5 17.5" stroke="#3b6fd6"/>
</svg>
<svg style="left:1106px;top:690px" width="15" height="3" viewBox="0 0 15 3" stroke="#333" stroke-width="1.1"><path d="M1 1.5 H14"/></svg>
<div class="t" style="left:1139px;top:686px;font-size:12px;color:#222">缩放100%</div>
<svg style="left:1210px;top:684px" width="15" height="15" viewBox="0 0 15 15" stroke="#333" stroke-width="1.1"><path d="M1 7.5 H14 M7.5 1 V14"/></svg>

<div class="t" style="left:694.7px;top:449.7px;width:20px;height:20px;font-size:19px;line-height:20px;font-weight:300;color:rgba(192,74,214,0.82);transform:rotate(274.0deg);text-align:center">可</div>
<div class="t" style="left:707.5px;top:414.0px;width:20px;height:20px;font-size:19px;line-height:20px;font-weight:300;color:rgba(192,74,214,0.82);transform:rotate(305.6deg);text-align:center">以</div>
<div class="t" style="left:737.1px;top:390.4px;width:20px;height:20px;font-size:19px;line-height:20px;font-weight:300;color:rgba(192,74,214,0.82);transform:rotate(337.2deg);text-align:center">用</div>
<div class="t" style="left:774.6px;top:385.8px;width:20px;height:20px;font-size:19px;line-height:20px;font-weight:300;color:rgba(192,74,214,0.82);transform:rotate(368.8deg);text-align:center">任</div>
<div class="t" style="left:809.0px;top:401.6px;width:20px;height:20px;font-size:19px;line-height:20px;font-weight:300;color:rgba(192,74,214,0.82);transform:rotate(400.4deg);text-align:center">何</div>
<div class="t" style="left:830.1px;top:433.0px;width:20px;height:20px;font-size:19px;line-height:20px;font-weight:300;color:rgba(192,74,214,0.82);transform:rotate(432.0deg);text-align:center">方</div>
<div class="t" style="left:831.6px;top:470.8px;width:20px;height:20px;font-size:19px;line-height:20px;font-weight:300;color:rgba(192,74,214,0.82);transform:rotate(463.6deg);text-align:center">式</div>
<div class="t" style="left:813.0px;top:503.8px;width:20px;height:20px;font-size:19px;line-height:20px;font-weight:300;color:rgba(192,74,214,0.82);transform:rotate(495.2deg);text-align:center">查</div>
<div class="t" style="left:779.9px;top:522.2px;width:20px;height:20px;font-size:19px;line-height:20px;font-weight:300;color:rgba(192,74,214,0.82);transform:rotate(526.8deg);text-align:center">看</div>
<div class="t" style="left:742.1px;top:520.4px;width:20px;height:20px;font-size:19px;line-height:20px;font-weight:300;color:rgba(192,74,214,0.82);transform:rotate(558.4deg);text-align:center">文</div>
<div class="t" style="left:710.8px;top:499.2px;width:20px;height:20px;font-size:19px;line-height:20px;font-weight:300;color:rgba(192,74,214,0.82);transform:rotate(590.0deg);text-align:center">本</div>
<div class="t" style="left:695.2px;top:464.7px;width:20px;height:20px;font-size:19px;line-height:20px;font-weight:300;color:rgba(192,74,214,0.82);transform:rotate(621.6deg);text-align:center">。</div>
</body></html>
